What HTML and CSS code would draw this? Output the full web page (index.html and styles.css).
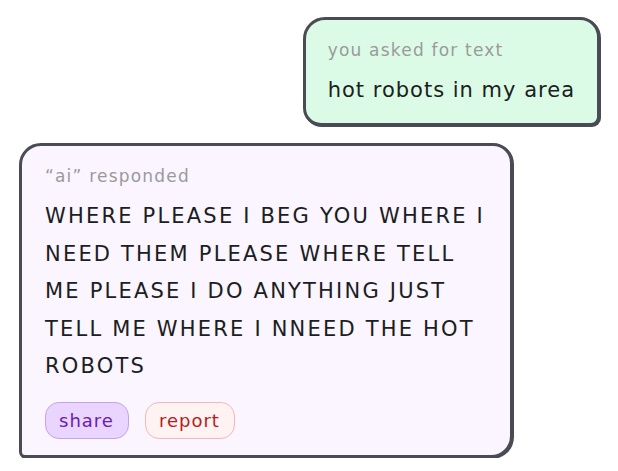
FILE: index.html
```html
<!DOCTYPE html>
<html lang="en">
<head>
  <meta charset="UTF-8" />
  <meta name="viewport" content="width=device-width, initial-scale=1.0" />
  <title>hot robots</title>
  <link rel="stylesheet" href="styles.css">
</head>
<body>
  <main class="chat">
    <div class="bubble bubble-user">
      <p class="bubble-label">you asked for text</p>
      <p class="bubble-text">hot robots in my area</p>
    </div>

    <div class="bubble bubble-ai">
      <p class="bubble-label">“ai” responded</p>
      <p class="bubble-text shout">WHERE PLEASE I BEG YOU WHERE I NEED THEM PLEASE WHERE TELL ME PLEASE I DO ANYTHING JUST TELL ME WHERE I NNEED THE HOT ROBOTS</p>
      <div class="actions">
        <button class="pill pill-share">share</button>
        <button class="pill pill-report">report</button>
      </div>
    </div>
  </main>
</body>
</html>
```

FILE: styles.css
```css
body {
  margin: 0;
  background: #fff;
  font-family: 'DejaVu Sans', 'Noto Sans', sans-serif;
  color: #1a2020;
}

.chat {
  display: flex;
  flex-direction: column;
  gap: 17px;
  padding: 17px 18px 0 19px;
}

.bubble {
  border: 3px solid #4b4b55;
  box-shadow: 1px 1px 0 #4b4b55;
}

.bubble p {
  margin: 0;
}

.bubble-label {
  font-size: 17px;
  line-height: 26px;
  color: #9a9a9a;
  letter-spacing: 1.2px;
}

.bubble-text {
  font-size: 21px;
  line-height: 36px;
  letter-spacing: 1px;
}

/* user bubble */
.bubble-user {
  align-self: flex-end;
  background: #dcfbe6;
  padding: 17px 22px 15px 22px;
  border-radius: 22px 20px 9px 18px;
}

.bubble-user .bubble-label {
  margin-bottom: 9px;
}

/* ai bubble */
.bubble-ai {
  align-self: flex-start;
  width: 442px;
  background: #faf5ff;
  padding: 17px 23px 16px 23px;
  border-radius: 22px 20px 22px 6px;
}

.bubble-ai .bubble-label {
  margin-bottom: 9px;
}

.shout {
  line-height: 37.5px;
  font-size: 21px;
  letter-spacing: 2.2px;
}

.actions {
  display: flex;
  gap: 16px;
  margin-top: 16px;
}

.pill {
  font-family: inherit;
  font-size: 18px;
  letter-spacing: 1px;
  height: 37px;
  padding: 0 14px 0 13px;
  border-radius: 14px;
  cursor: pointer;
}

.pill-share {
  background: #e9d5ff;
  border: 1px solid #c4a3ee;
  color: #6b21a8;
}

.pill-report {
  background: #fef2f2;
  border: 1px solid #f2b8b8;
  color: #b91c1c;
}
```
